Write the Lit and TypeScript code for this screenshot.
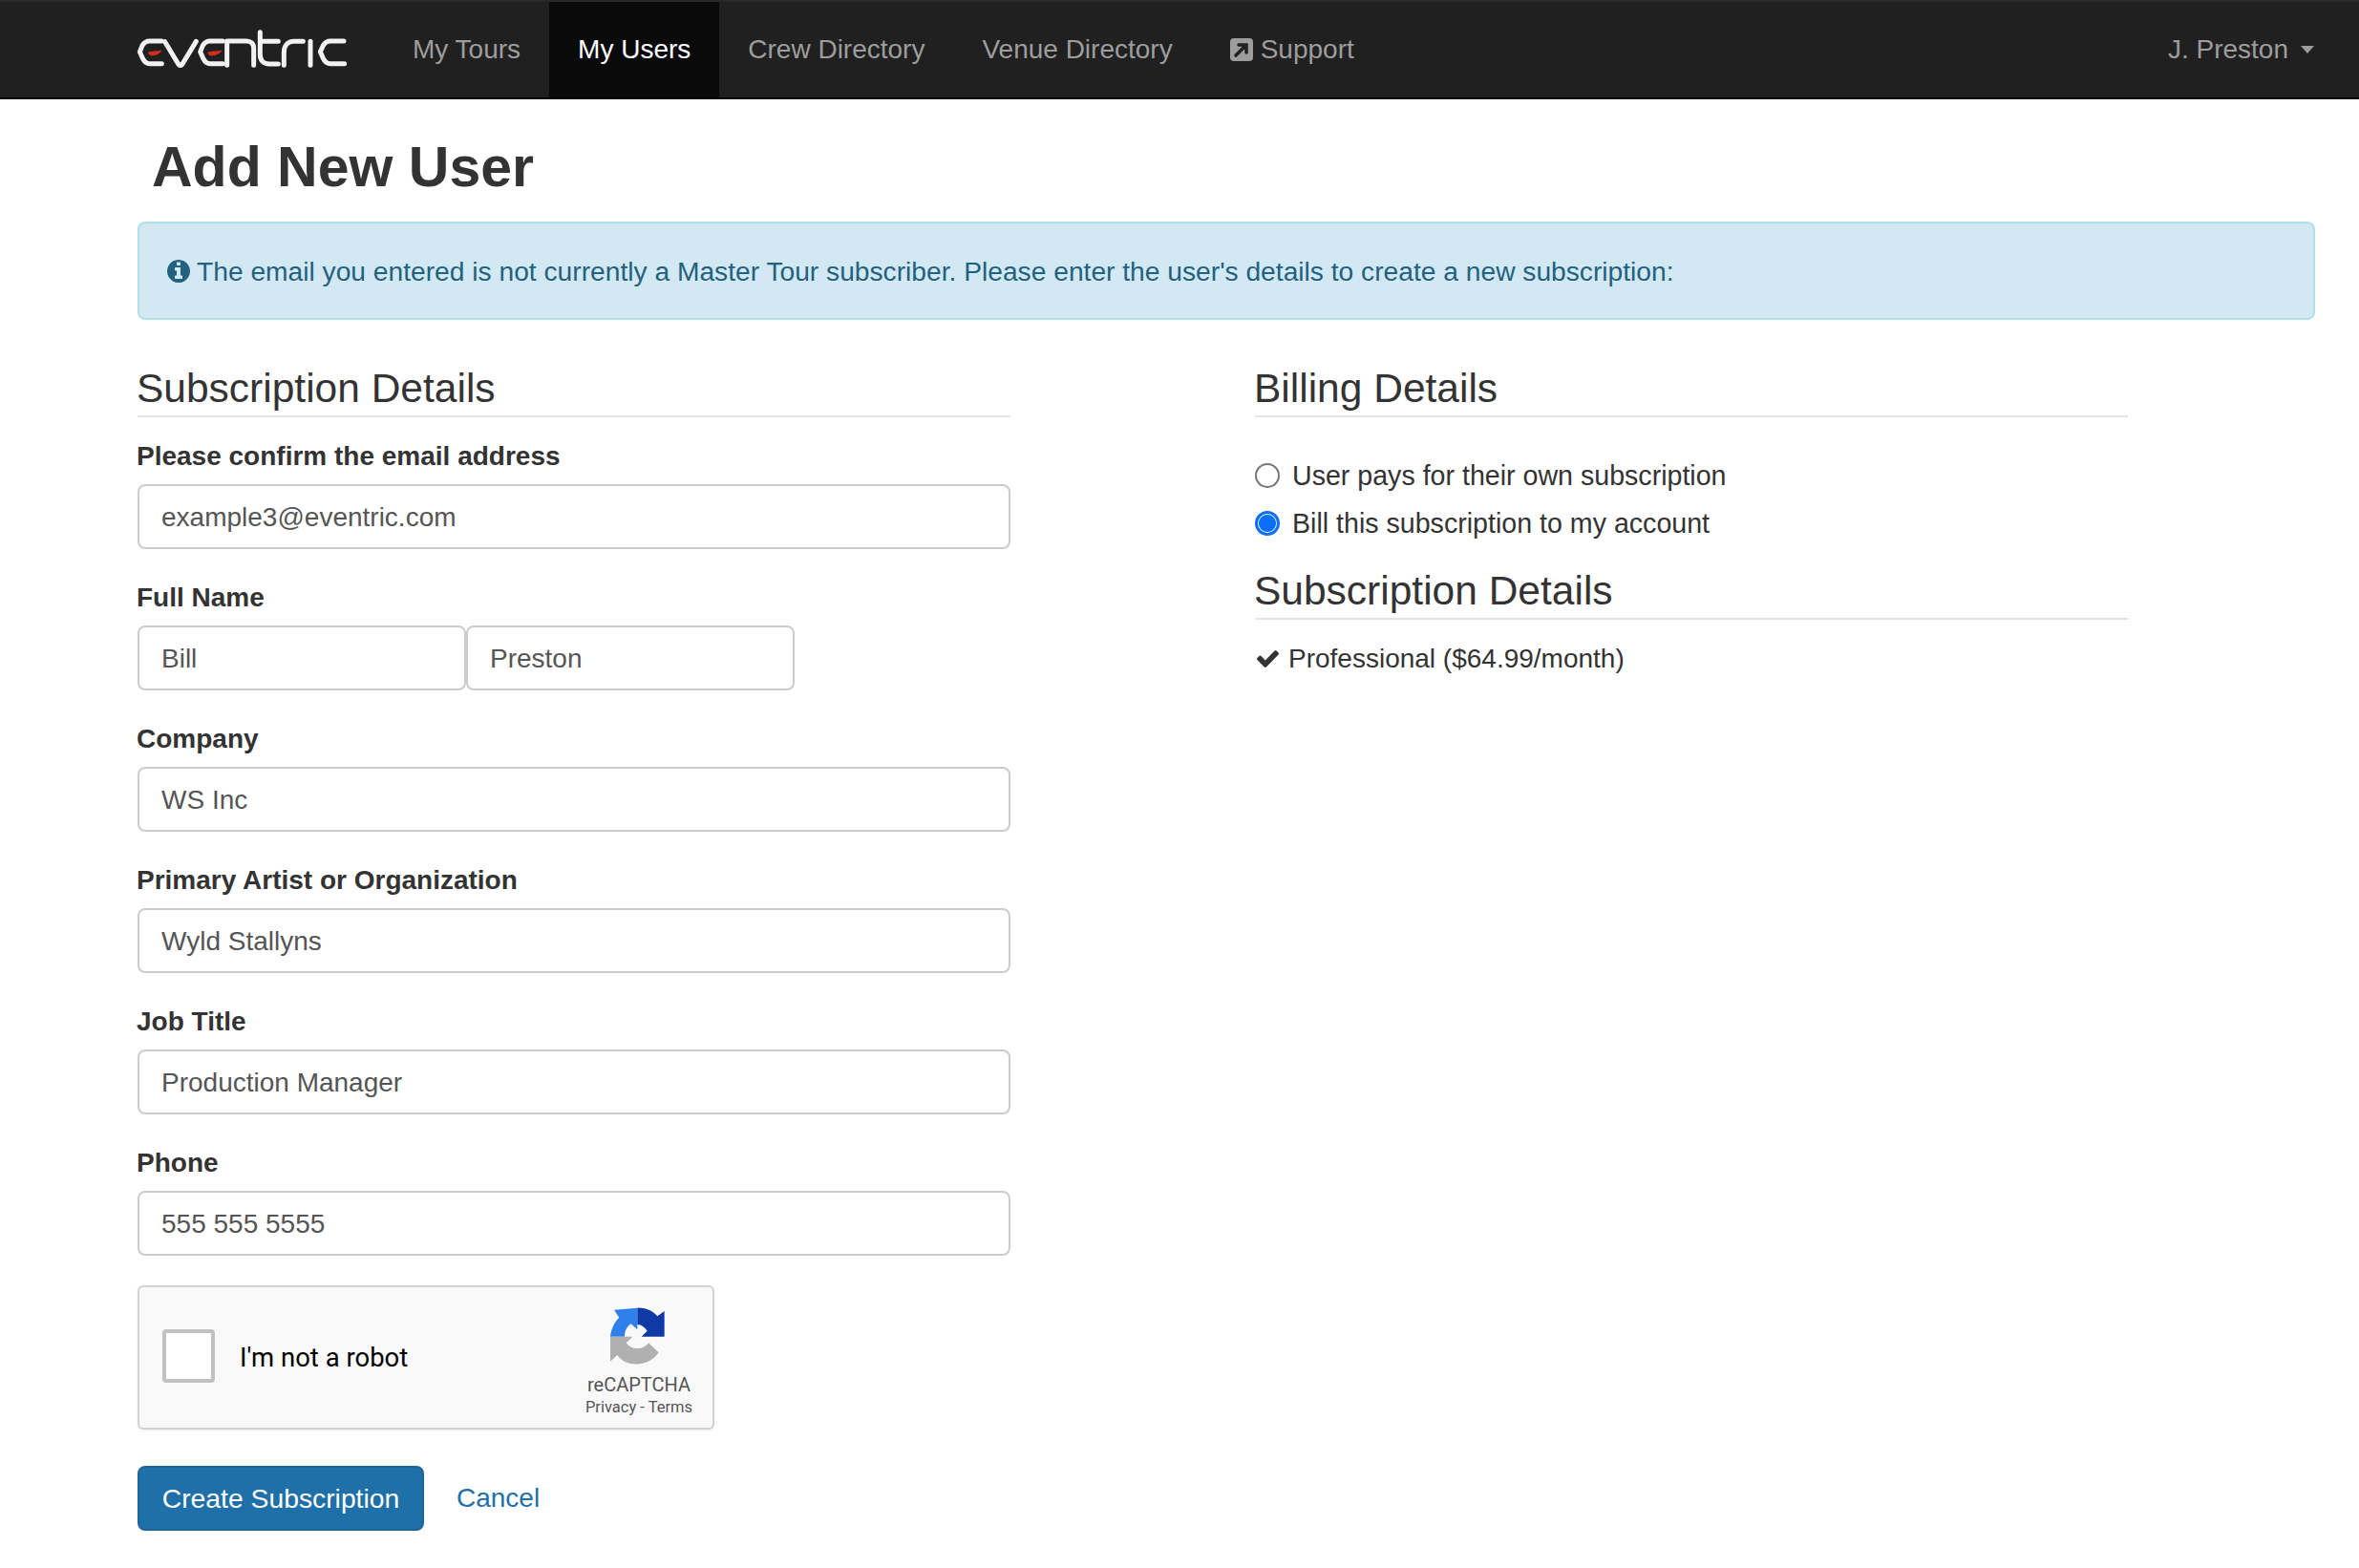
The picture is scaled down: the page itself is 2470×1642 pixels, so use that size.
import { css, html, LitElement } from "lit";
import { customElement } from "lit/decorators.js";

const INFO =
  "M1152 1376v-160q0-14-9-23t-23-9h-96v-512q0-14-9-23t-23-9h-320q-14 0-23 9t-9 23v160q0 14 9 23t23 9h96v320h-96q-14 0-23 9t-9 23v160q0 14 9 23t23 9h448q14 0 23-9t9-23zm-128-896v-160q0-14-9-23t-23-9h-192q-14 0-23 9t-9 23v160q0 14 9 23t23 9h192q14 0 23-9t9-23zm640 416q0 209-103 385.5t-279.5 279.5-385.5 103-385.5-103-279.5-279.5-103-385.5 103-385.5 279.5-279.5 385.5-103 385.5 103 279.5 279.5 103 385.5z";
const CHECK =
  "M1671 566q0 40-28 68l-724 724-136 136q-28 28-68 28t-68-28l-136-136-362-362q-28-28-28-68t28-68l136-136q28-28 68-28t68 28l294 295 656-657q28-28 68-28t68 28l136 136q28 28 28 68z";

@customElement("app-root")
export class AppRoot extends LitElement {
  renderLogo() {
    return html`<svg class="logo" viewBox="0 0 720 165" role="img" aria-label="eventric">
      <g fill="none" stroke="#f2f2f2" stroke-width="15" stroke-linecap="round" stroke-linejoin="round">
        <path d="M106 54H68C56 54 50 60 45 68L37 88L47 110C52 120 58 125 68 125H106" />
        <path d="M116 56L158 126C162 132 167 132 171 126L214 55" />
        <path d="M298 54H258C246 54 240 60 235 68L227 88L237 110C242 120 248 125 258 125H298" />
        <path d="M311 130V54H372C386 54 395 62 395 76V130" />
        <path d="M415 26V96C415 115 425 126 444 126H472M415 55H472" />
        <path d="M490 130V90C490 68 502 55 522 55H550" />
        <path d="M573 55V130" />
        <path d="M678 54H636C624 54 618 60 613 68L604 88L614 110C619 120 625 125 636 125H680" />
      </g>
      <g fill="#d62c1c">
        <path d="M63 89C75 85 90 85 106 83C101 95 86 100 73 100C67 98 63 94 63 89Z" />
        <path d="M250 89C262 85 277 85 295 83C290 95 273 100 260 100C254 98 250 94 250 89Z" />
      </g>
    </svg>`;
  }

  renderCaptchaLogo() {
    return html`<svg class="rc-logo" viewBox="0 0 240 240">
      <path fill="#2f7fec" d="M30 122C32 100 42 78 58 62L42 38L115 32V100L95 82C82 90 75 105 75 122Z" />
      <path fill="#0f3aa6" d="M115 32C140 30 165 42 178 58L200 42V122H128L146 104C138 92 128 85 115 84Z" />
      <path fill="#b0b0b0" d="M30 122H100L80 142C95 165 135 165 150 142L182 172C160 205 120 215 85 205C72 200 60 192 52 180L30 200Z" />
    </svg>`;
  }

  renderField(label: string, value: string) {
    return html`<div class="field">
      <label>${label}</label>
      <input type="text" .value=${value} />
    </div>`;
  }

  render() {
    return html`
      <nav class="navbar">
        ${this.renderLogo()}
        <a>My Tours</a>
        <a class="active">My Users</a>
        <a>Crew Directory</a>
        <a>Venue Directory</a>
        <a class="support">
          <svg viewBox="0 0 24 24">
            <rect width="24" height="24" rx="4" fill="#9d9d9d" />
            <path d="M6 18L16 8M9 7H17V15" fill="none" stroke="#222" stroke-width="3.6" stroke-linecap="round" />
          </svg>
          Support
        </a>
        <a class="user">J. Preston<span class="caret"></span></a>
      </nav>

      <main>
        <h1>Add New User</h1>
        <div class="alert">
          <svg viewBox="128 128 1536 1536"><path fill="currentColor" d=${INFO} /></svg>
          The email you entered is not currently a Master Tour subscriber. Please enter the user's details to create a new subscription:
        </div>

        <div class="columns">
          <section>
            <h3>Subscription Details</h3>
            ${this.renderField("Please confirm the email address", "example3@eventric.com")}
            <div class="field">
              <label>Full Name</label>
              <div class="name-row">
                <input type="text" .value=${"Bill"} />
                <input type="text" .value=${"Preston"} />
              </div>
            </div>
            ${this.renderField("Company", "WS Inc")}
            ${this.renderField("Primary Artist or Organization", "Wyld Stallyns")}
            ${this.renderField("Job Title", "Production Manager")}
            ${this.renderField("Phone", "555 555 5555")}

            <div class="captcha">
              <span class="rc-box"></span>
              <span class="rc-text">I'm not a robot</span>
              <div class="rc-brand">
                ${this.renderCaptchaLogo()}
                <span class="rc-name">reCAPTCHA</span>
                <span class="rc-links">Privacy - Terms</span>
              </div>
            </div>

            <div class="actions">
              <button type="button">Create Subscription</button>
              <a class="cancel">Cancel</a>
            </div>
          </section>

          <section>
            <h3>Billing Details</h3>
            <div class="radios">
              <label class="radio"><input type="radio" name="billing" />User pays for their own subscription</label>
              <label class="radio"><input type="radio" name="billing" checked />Bill this subscription to my account</label>
            </div>
            <h3>Subscription Details</h3>
            <div class="plan">
              <svg viewBox="121 334 1550 1188" preserveAspectRatio="none"><path fill="currentColor" d=${CHECK} /></svg>
              Professional ($64.99/month)
            </div>
          </section>
        </div>
      </main>
    `;
  }

  static styles = css`
    :host {
      display: block;
      min-height: 1642px;
      background: #fff;
      color: #333;
      font-family: "Liberation Sans", Arial, sans-serif;
      font-size: 28px;
      line-height: 40px;
    }

    * {
      box-sizing: border-box;
    }

    .navbar {
      display: flex;
      align-items: stretch;
      height: 104px;
      padding: 0 47px 0 144px;
      background: #202020;
      border-top: 2px solid #292929;
      border-bottom: 2px solid #000;
    }

    .logo {
      align-self: center;
      flex: none;
      width: 240px;
      height: 55px;
      margin: 0 28px 0 -10px;
    }

    .navbar a {
      display: flex;
      align-items: center;
      padding: 0 30px;
      color: #9d9d9d;
      white-space: nowrap;
    }

    .navbar a.active {
      color: #fff;
      background: #0a0a0a;
    }

    .navbar .support svg {
      width: 24px;
      height: 24px;
      margin-right: 8px;
    }

    .navbar .user {
      margin-left: auto;
      padding: 0;
    }

    .caret {
      width: 0;
      height: 0;
      margin-left: 13px;
      border-top: 8px solid #9d9d9d;
      border-left: 7.5px solid transparent;
      border-right: 7.5px solid transparent;
    }

    main {
      padding: 0 46px 0 144px;
    }

    h1 {
      margin: 0;
      padding: 31px 0 17px 15px;
      font-size: 59px;
      line-height: 80px;
      font-weight: 700;
    }

    .alert {
      display: flex;
      align-items: center;
      padding: 29.5px 29px;
      color: #23617f;
      background: #d2e9f4;
      border: 2px solid #b0e1ea;
      border-radius: 8px;
      font-size: 28.2px;
      white-space: nowrap;
    }

    .alert svg {
      width: 24px;
      height: 24px;
      margin-right: 7px;
      flex: none;
    }

    .columns {
      display: flex;
      gap: 256px;
      margin-top: 44px;
    }

    section {
      width: 914px;
      flex: none;
    }

    h3 {
      height: 58px;
      margin: 0 0 21px;
      font-size: 42.5px;
      line-height: 56px;
      font-weight: 400;
      text-indent: -1px;
      border-bottom: 2px solid #e4e4e4;
    }

    .field {
      margin-bottom: 31px;
    }

    .field label {
      display: block;
      margin: 0 0 9px -1px;
      font-weight: 700;
    }

    input[type="text"] {
      display: block;
      width: 100%;
      height: 68px;
      padding: 1px 23px 0;
      border: 2px solid #ccc;
      border-radius: 8px;
      color: #555;
      background: #fff;
      font: inherit;
      outline: none;
    }

    .name-row {
      display: flex;
    }

    .name-row input[type="text"] {
      width: 344px;
    }

    .captcha {
      display: flex;
      align-items: center;
      width: 604px;
      height: 151px;
      margin-top: 31px;
      padding: 0 12px 0 24px;
      background: #f9f9f9;
      border: 2px solid #d3d3d3;
      border-radius: 6px;
      box-shadow: 0 1px 3px rgba(0, 0, 0, 0.08);
      font-family: Roboto, "Liberation Sans", sans-serif;
    }

    .rc-box {
      flex: none;
      width: 55px;
      height: 56px;
      margin-top: -4px;
      background: #fff;
      border: 4px solid #c1c1c1;
      border-radius: 4px;
    }

    .rc-text {
      margin-left: 26px;
      font-size: 27.5px;
      color: #000;
    }

    .rc-brand {
      display: flex;
      flex-direction: column;
      align-items: center;
      align-self: flex-start;
      width: 130px;
      margin-left: auto;
      padding-top: 11px;
      color: #555;
    }

    .rc-logo {
      flex: none;
      width: 80px;
      height: 80px;
    }

    .rc-name {
      font-size: 20px;
      line-height: 22px;
    }

    .rc-links {
      margin-top: 3px;
      font-size: 16.5px;
      line-height: 20px;
    }

    .actions {
      display: flex;
      align-items: center;
      gap: 34px;
      margin-top: 38px;
    }

    button {
      width: 300px;
      height: 68px;
      padding: 0;
      color: #fff;
      background: #1f6fa9;
      border: 2px solid #1c659a;
      border-radius: 8px;
      font: inherit;
      font-size: 28.3px;
    }

    .cancel {
      color: #1f6fa9;
    }

    .radios {
      display: flex;
      flex-direction: column;
      margin-top: 36px;
      margin-bottom: 18px;
    }

    .radio {
      display: flex;
      align-items: center;
      height: 50px;
      font-size: 28.6px;
    }

    .radio input {
      appearance: none;
      flex: none;
      width: 26px;
      height: 26px;
      margin: 0 13px 0 0;
      border: 2px solid #767676;
      border-radius: 50%;
      background: #fff;
    }

    .radio input:checked {
      border: 3px solid #0b6ffd;
      background: radial-gradient(circle, #0b6ffd 0 8.5px, #fff 9.5px);
    }

    .plan {
      display: flex;
      align-items: center;
      height: 40px;
      padding-left: 2px;
    }

    .plan svg {
      flex: none;
      width: 23px;
      height: 18px;
      margin-right: 10px;
    }
  `;
}

declare global {
  interface HTMLElementTagNameMap {
    "app-root": AppRoot;
  }
}
